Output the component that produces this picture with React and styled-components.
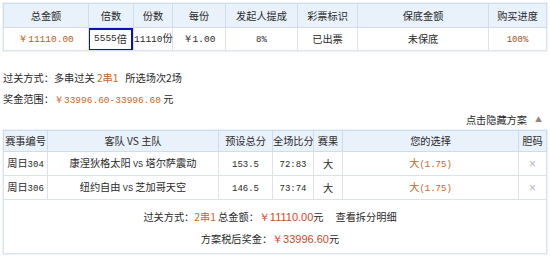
import React from "react";
import styled, { createGlobalStyle } from "styled-components";

const GlobalStyle = createGlobalStyle`
  body {
    margin: 0;
    background: #fff;
    font-family: "Noto Sans CJK SC", "Liberation Sans", sans-serif;
    font-size: 10.2px;
    color: #2a2a2a;
  }
`;

const Page = styled.div`
  width: 550px;
  height: 258px;
  padding: 3px 0 0 3px;
  box-sizing: border-box;
  overflow: hidden;
`;

const Table = styled.table`
  width: 543px;
  border-collapse: collapse;
  table-layout: fixed;
  border: 1px solid #c6d6e8;
  box-shadow: 0 0 0 1px #eef3f9;
  margin-top: ${(p) => p.$mt || 0}px;
`;

const Th = styled.th`
  height: ${(p) => p.$h || 23}px;
  padding: 0;
  line-height: 14px;
  font-weight: normal;
  background: #e9f1fb;
  border: 1px solid #cfdcea;
  text-align: center;
  color: #2a2a2a;
  white-space: nowrap;
  overflow: hidden;
`;

const Td = styled.td`
  height: ${(p) => p.$h || 23}px;
  padding: 0;
  line-height: 14px;
  border: 1px solid #dbe4ee;
  text-align: center;
  white-space: nowrap;
  color: ${(p) => p.$color || "#2a2a2a"};
  background: #fff;
`;

const Num = styled.span`
  font-family: "Liberation Mono", monospace;
  font-size: ${(p) => p.$size || 9.5}px;
  color: ${(p) => p.$color || "inherit"};
`;

const Multiple = styled.div`
  margin: -1px 0 -1px -1px;
  height: 19px;
  border: 2px solid #0a14b4;
  display: flex;
  align-items: center;
  justify-content: center;
`;

const Info = styled.div`
  margin-top: 16px;
  line-height: 21px;
`;

const Orange = styled.span`
  color: ${(p) => p.$color || "#c8662a"};
`;

const Amount = styled.span`
  font-family: "Liberation Sans", sans-serif;
  font-size: 11px;
  color: #cc4a2a;
`;

const ToggleRow = styled.div`
  display: flex;
  justify-content: flex-end;
  align-items: center;
  gap: 8px;
  height: 16px;
  padding-right: 8px;
`;

const Arrow = styled.span`
  font-size: 7px;
  color: #888;
`;

const Cross = styled.span`
  font-family: "Liberation Sans", sans-serif;
  color: #b5b5b5;
  font-size: 12px;
`;

const Footer = styled.td`
  height: 51px;
  padding: 2px 0 0;
  border: 1px solid #dbe4ee;
  text-align: center;
  line-height: 21px;
  background: #fff;
`;

const Footnote = styled.div`
  padding-right: 10px;
`;

const Link = styled.span`
  margin-left: 12px;
  color: #2a2a2a;
`;

const topCols = [85, 45, 39, 53, 72, 60, 131, 58];
const matchCols = [44, 171, 54, 41, 29, 176, 28];

const matches = [
  { id: "304", away: "康涅狄格太阳", home: "塔尔萨震动", total: "153.5", score: "72:83", result: "大" },
  { id: "306", away: "纽约自由", home: "芝加哥天空", total: "146.5", score: "73:74", result: "大" },
];

const App = () => {
  return (
    <Page>
      <GlobalStyle />
      <Table>
        <colgroup>
          {topCols.map((w, i) => (
            <col key={i} style={{ width: w }} />
          ))}
        </colgroup>
        <thead>
          <tr>
            <Th $h={23}>总金额</Th>
            <Th $h={23}>倍数</Th>
            <Th $h={23}>份数</Th>
            <Th $h={23}>每份</Th>
            <Th $h={23}>发起人提成</Th>
            <Th $h={23}>彩票标识</Th>
            <Th $h={23}>保底金额</Th>
            <Th $h={23}>购买进度</Th>
          </tr>
        </thead>
        <tbody>
          <tr>
            <Td $h={22}>
              <Num $color="#b8601e">￥11110.00</Num>
            </Td>
            <Td $h={22}>
              <Multiple>
                <Num>5555</Num>倍
              </Multiple>
            </Td>
            <Td $h={22}>
              <Num>11110</Num>份
            </Td>
            <Td $h={22}>
              <Num>￥1.00</Num>
            </Td>
            <Td $h={22}>
              <Num $size={9}>8%</Num>
            </Td>
            <Td $h={22}>已出票</Td>
            <Td $h={22}>未保底</Td>
            <Td $h={22}>
              <Num $size={9} $color="#a0521d">100%</Num>
            </Td>
          </tr>
        </tbody>
      </Table>

      <Info>
        <div>
          过关方式：多串过关 <Orange>2串1</Orange>&nbsp;&nbsp; 所选场次2场
        </div>
        <div>
          奖金范围：<Orange><Num>￥33996.60-33996.60</Num></Orange> 元
        </div>
      </Info>

      <ToggleRow>
        点击隐藏方案 <Arrow>▲</Arrow>
      </ToggleRow>

      <Table $mt={3}>
        <colgroup>
          {matchCols.map((w, i) => (
            <col key={i} style={{ width: w }} />
          ))}
        </colgroup>
        <thead>
          <tr>
            <Th $h={20}>赛事编号</Th>
            <Th $h={20}>客队 VS 主队</Th>
            <Th $h={20}>预设总分</Th>
            <Th $h={20}>全场比分</Th>
            <Th $h={20}>赛果</Th>
            <Th $h={20}>您的选择</Th>
            <Th $h={20}>胆码</Th>
          </tr>
        </thead>
        <tbody>
          {matches.map((m) => (
            <tr key={m.id}>
              <Td $h={23}>
                周日<Num $size={9}>{m.id}</Num>
              </Td>
              <Td $h={23}>
                {m.away} <Num $size={8.5}>VS</Num> {m.home}
              </Td>
              <Td $h={23}>
                <Num $size={9}>{m.total}</Num>
              </Td>
              <Td $h={23}>
                <Num $size={9}>{m.score}</Num>
              </Td>
              <Td $h={23}>{m.result}</Td>
              <Td $h={23} $color="#c0692a">
                大<Num $size={9}>(1.75)</Num>
              </Td>
              <Td $h={23}>
                <Cross>×</Cross>
              </Td>
            </tr>
          ))}
          <tr>
            <Footer colSpan={7}>
              <Footnote>
                过关方式：<Orange>2串1</Orange> 总金额：
                <Amount>￥11110.00</Amount>元
                <Link>查看拆分明细</Link>
              </Footnote>
              <Footnote>
                方案税后奖金：<Amount>￥33996.60</Amount>元
              </Footnote>
            </Footer>
          </tr>
        </tbody>
      </Table>
    </Page>
  );
};

export default App;
